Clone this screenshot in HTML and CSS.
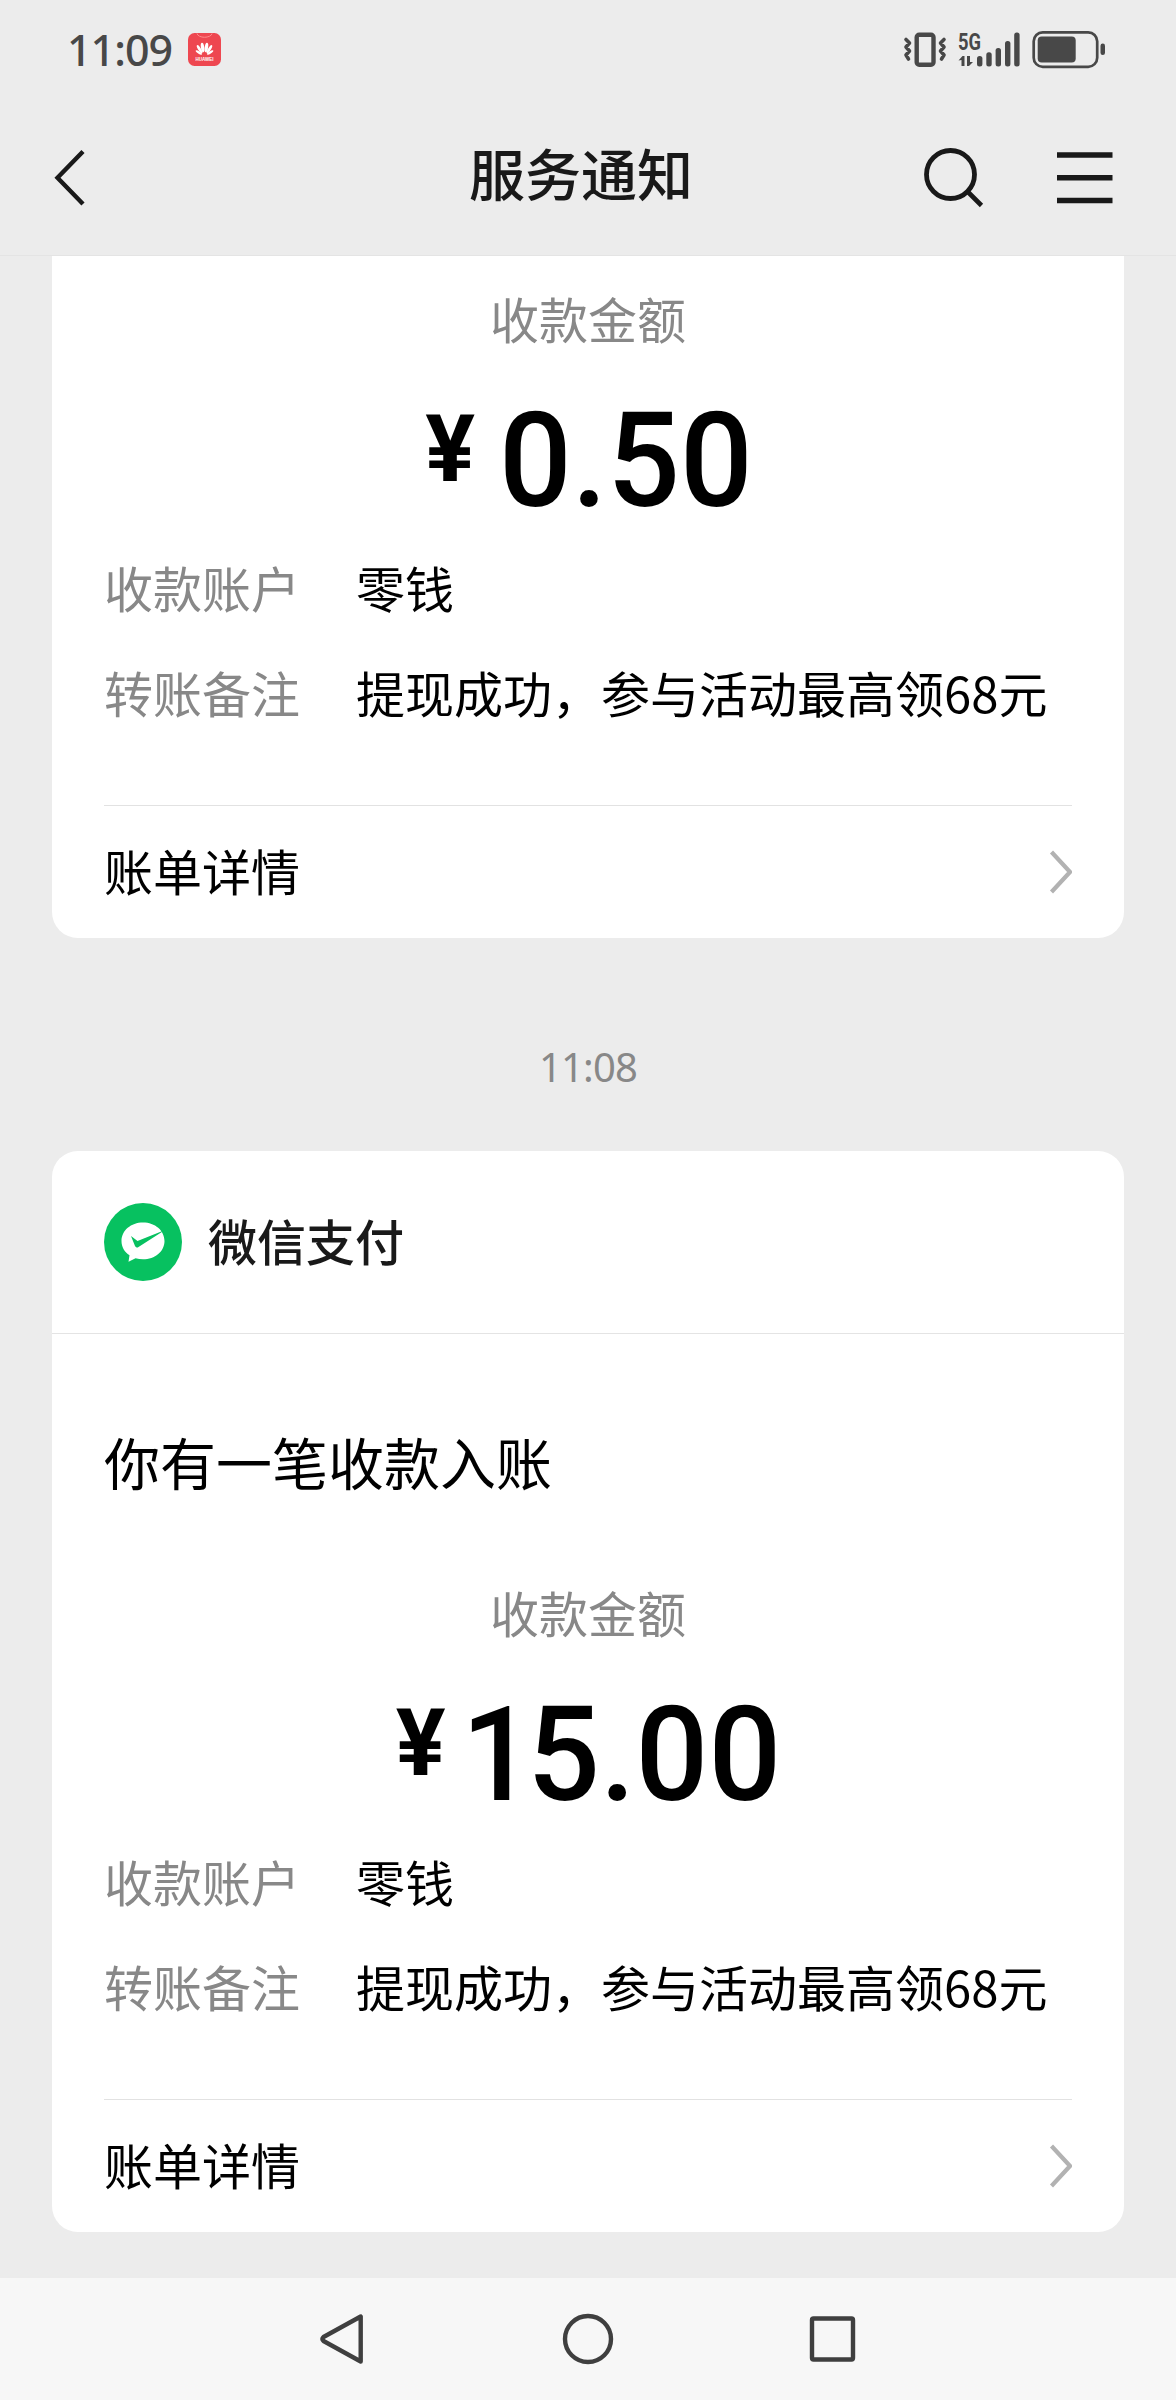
FILE: index.html
```html
<!DOCTYPE html>
<html lang="zh-CN">
<head>
<meta charset="utf-8">
<title>服务通知</title>
<link rel="stylesheet" href="styles.css">
</head>
<body>
<div class="screen">
  <div class="status">
    <span class="clock">11:09</span>
    <svg class="app-badge" width="33" height="33" viewBox="0 0 33 33">
      <rect width="33" height="33" rx="6.5" fill="#ee4750"/>
      <path d="M9 .5C10 5.500 23 5.500 24 .5" fill="none" stroke="#ff8a8a" stroke-width="1"/>
      <g fill="#fff">
        <ellipse cx="14.600" cy="14.500" rx="1.700" ry="4.800" transform="rotate(-9 14.600 14.500)"/>
        <ellipse cx="18.400" cy="14.500" rx="1.700" ry="4.800" transform="rotate(9 18.400 14.500)"/>
        <ellipse cx="11.600" cy="16.200" rx="1.400" ry="4.800" transform="rotate(-32 11.600 16.200)"/>
        <ellipse cx="21.400" cy="16.200" rx="1.400" ry="4.800" transform="rotate(32 21.400 16.200)"/>
        <ellipse cx="10.800" cy="19.500" rx="1.200" ry="3.600" transform="rotate(-58 10.800 19.500)"/>
        <ellipse cx="22.200" cy="19.500" rx="1.200" ry="3.600" transform="rotate(58 22.200 19.500)"/>
      </g>
      <text class="badge-text" x="16.500" y="28" text-anchor="middle">HUAWEI</text>
    </svg>
    <svg class="status-icons" width="206" height="42" viewBox="902 28 206 42">
      <g fill="none" stroke="#484848" stroke-width="3.600" stroke-linejoin="round" stroke-linecap="round">
        <rect x="916.700" y="34.700" width="16.800" height="30" rx="2.500" stroke-width="4.400"/>
        <path d="M906 39.500l3.500 3.500-3.500 4 3.500 4-3.500 4 2.500 4M944 39.500l-3.500 3.500 3.500 4-3.500 4 3.500 4-2.500 4"/>
      </g>
      <text class="net" x="958" y="50" textLength="23" lengthAdjust="spacingAndGlyphs">5G</text>
      <path d="M958.500 60.500l4-4.500h2v10h-3v-6zM967 56h3v6h3l-4 4h-2z" fill="#484848"/>
      <g fill="#484848">
        <rect x="977" y="56" width="5.400" height="10.500" rx="2.500"/>
        <rect x="986.300" y="52.300" width="5.400" height="14.200" rx="2.500"/>
        <rect x="995.600" y="48" width="5.400" height="18.500" rx="2.500"/>
        <rect x="1005" y="41" width="5.400" height="25.500" rx="2.500"/>
        <rect x="1014.200" y="32.500" width="5.400" height="34" rx="2.500"/>
        <rect x="1037.700" y="36.500" width="38" height="26" rx="4"/>
        <rect x="1100.500" y="43.500" width="4.500" height="11.500" rx="2.200"/>
      </g>
      <rect x="1033.700" y="32.300" width="63.500" height="34.500" rx="9" fill="none" stroke="#484848" stroke-width="2.700"/>
    </svg>
  </div>
  <div class="navbar">
    <svg class="back" width="34" height="60" viewBox="53 147 34 60"><path d="M83 151.500L57.500 177.700L83 204" fill="none" stroke="#191919" stroke-width="4.400"/></svg>
    <h1>服务通知</h1>
    <svg class="tools" width="194" height="64" viewBox="922 145 194 64">
      <circle cx="950.500" cy="174.500" r="24" fill="none" stroke="#191919" stroke-width="4.800"/>
      <path d="M967.500 191.500L981.500 205.500" stroke="#191919" stroke-width="4.600"/>
      <path d="M1057 155h55.500M1057 177.700h55.500M1057 200.500h55.500" stroke="#191919" stroke-width="5.500"/>
    </svg>
  </div>

  <div class="card card-top">
    <div class="amount-label">收款金额</div>
    <div class="amount"><span class="yen">¥</span><span class="num">0.50</span></div>
    <div class="row"><span class="key">收款账户</span><span>零钱</span></div>
    <div class="row"><span class="key">转账备注</span><span>提现成功，参与活动最高领68元</span></div>
    <div class="detail"><span>账单详情</span>
      <svg width="24" height="46" viewBox="0 0 24 46"><path d="M3.500 3L22 23L3.500 43" fill="none" stroke="#b2b2b2" stroke-width="4.200"/></svg>
    </div>
  </div>

  <div class="time">11:08</div>

  <div class="card">
    <div class="card-head">
      <svg width="78" height="78" viewBox="0 0 78 78">
        <circle cx="39" cy="39" r="39" fill="#07c160"/>
        <path d="M39 19.500C27 19.500 17.500 27.500 17.500 38C17.500 44 20.500 49 25.500 52.200L24.500 58.800L31.500 55.200C34 56 36.500 56.300 39 56.300C51 56.300 60.500 48.500 60.500 38C60.500 27.500 51 19.500 39 19.500Z" fill="#fff"/>
        <path d="M27 33L33.500 38L61 27L34.500 44Q32.500 45.500 31 43Z" fill="#07c160"/>
      </svg>
      <span>微信支付</span>
    </div>
    <div class="headline">你有一笔收款入账</div>
    <div class="amount-label">收款金额</div>
    <div class="amount"><span class="yen">¥</span><span class="num"><span class="one">1</span>5.00</span></div>
    <div class="row"><span class="key">收款账户</span><span>零钱</span></div>
    <div class="row"><span class="key">转账备注</span><span>提现成功，参与活动最高领68元</span></div>
    <div class="detail"><span>账单详情</span>
      <svg width="24" height="46" viewBox="0 0 24 46"><path d="M3.500 3L22 23L3.500 43" fill="none" stroke="#b2b2b2" stroke-width="4.200"/></svg>
    </div>
  </div>

  <div class="sysnav">
    <svg width="540" height="54" viewBox="318 2312 540 54" fill="none" stroke="#3f3f3f" stroke-width="4.400" stroke-linejoin="round">
      <path d="M360.700 2316.500V2361.500L323.500 2341Q321.500 2339 323.500 2337Z"/>
      <circle cx="588" cy="2339" r="23"/>
      <rect x="812" y="2318.500" width="41" height="41" rx="1.500"/>
    </svg>
  </div>
</div>
</body>
</html>
```
FILE: styles.css
```css
* { box-sizing: border-box; }
body { margin: 0; background: #ececec; }
svg { display: block; flex: none; }

.screen {
  width: 1176px;
  height: 2400px;
  overflow: hidden;
  display: flex;
  flex-direction: column;
  background: #ececec;
  font-family: "Noto Sans CJK SC", sans-serif;
  font-size: 49px;
  color: #000;
}

.status {
  height: 98px;
  padding: 0 68px 0 67px;
  display: flex;
  align-items: center;
}
.clock {
  width: 121px;
  padding-top: 1px;
  font: 500 43px/60px "Noto Sans", sans-serif;
  letter-spacing: -1px;
  color: #484848;
  white-space: nowrap;
}
.badge-text { font: 700 4.500px "Liberation Sans", sans-serif; fill: #fff; }
.net { font: 700 24px Roboto, sans-serif; fill: #484848; }
.status-icons { margin-left: auto; }

.navbar {
  height: 158px;
  padding: 0 60px 0 53px;
  border-bottom: 1px solid #e4e4e4;
  display: flex;
  align-items: center;
}
.navbar .back { margin-top: 1px; }
.navbar h1 {
  margin: -9px 0 0 382px;
  font-size: 56px;
  line-height: 70px;
  font-weight: 500;
  color: #191919;
}
.navbar .tools { margin-left: auto; margin-top: 1px; }

.card {
  margin: 0 52px;
  background: #fff;
  border-radius: 26px;
}
.card-top { border-radius: 0 0 26px 26px; padding-top: 22px; }

.amount-label {
  height: 80px;
  line-height: 80px;
  text-align: center;
  color: #888;
}
.amount {
  height: 176px;
  padding-top: 3px;
  display: flex;
  justify-content: center;
  font-family: Roboto, sans-serif;
}
.yen { font-size: 93px; line-height: 178px; font-weight: 700; margin-right: 24px; }
.num {
  margin-right: -10px;
  font-size: 132px;
  line-height: 200px;
  font-weight: 500;
  transform: scaleX(.97);
  transform-origin: left;
}
.one { margin: 0 -7px 0 -9px; }
.row {
  height: 105px;
  line-height: 105px;
  padding: 0 52px;
  display: flex;
  white-space: nowrap;
}
.key { width: 252px; color: #888; }
.detail {
  height: 133px;
  margin: 61px 52px 0;
  border-top: 1px solid #e2e2e2;
  display: flex;
  align-items: center;
  justify-content: space-between;
}
.detail span { padding-bottom: 6px; }

.time {
  height: 213px;
  padding-top: 44px;
  display: flex;
  align-items: center;
  justify-content: center;
  font: 400 40px "Noto Sans", sans-serif;
  letter-spacing: -0.8px;
  color: #888;
}

.card-head {
  height: 183px;
  padding: 0 52px;
  border-bottom: 1px solid #e4e4e4;
  display: flex;
  align-items: center;
  gap: 26px;
  font-weight: 500;
  color: #191919;
}
.card-head span { padding-bottom: 6px; }
.headline {
  height: 238px;
  padding: 0 52px;
  line-height: 254px;
  font-size: 56px;
}

.sysnav {
  margin-top: auto;
  height: 122px;
  background: #f7f7f7;
  display: flex;
  align-items: center;
  justify-content: center;
}
```
